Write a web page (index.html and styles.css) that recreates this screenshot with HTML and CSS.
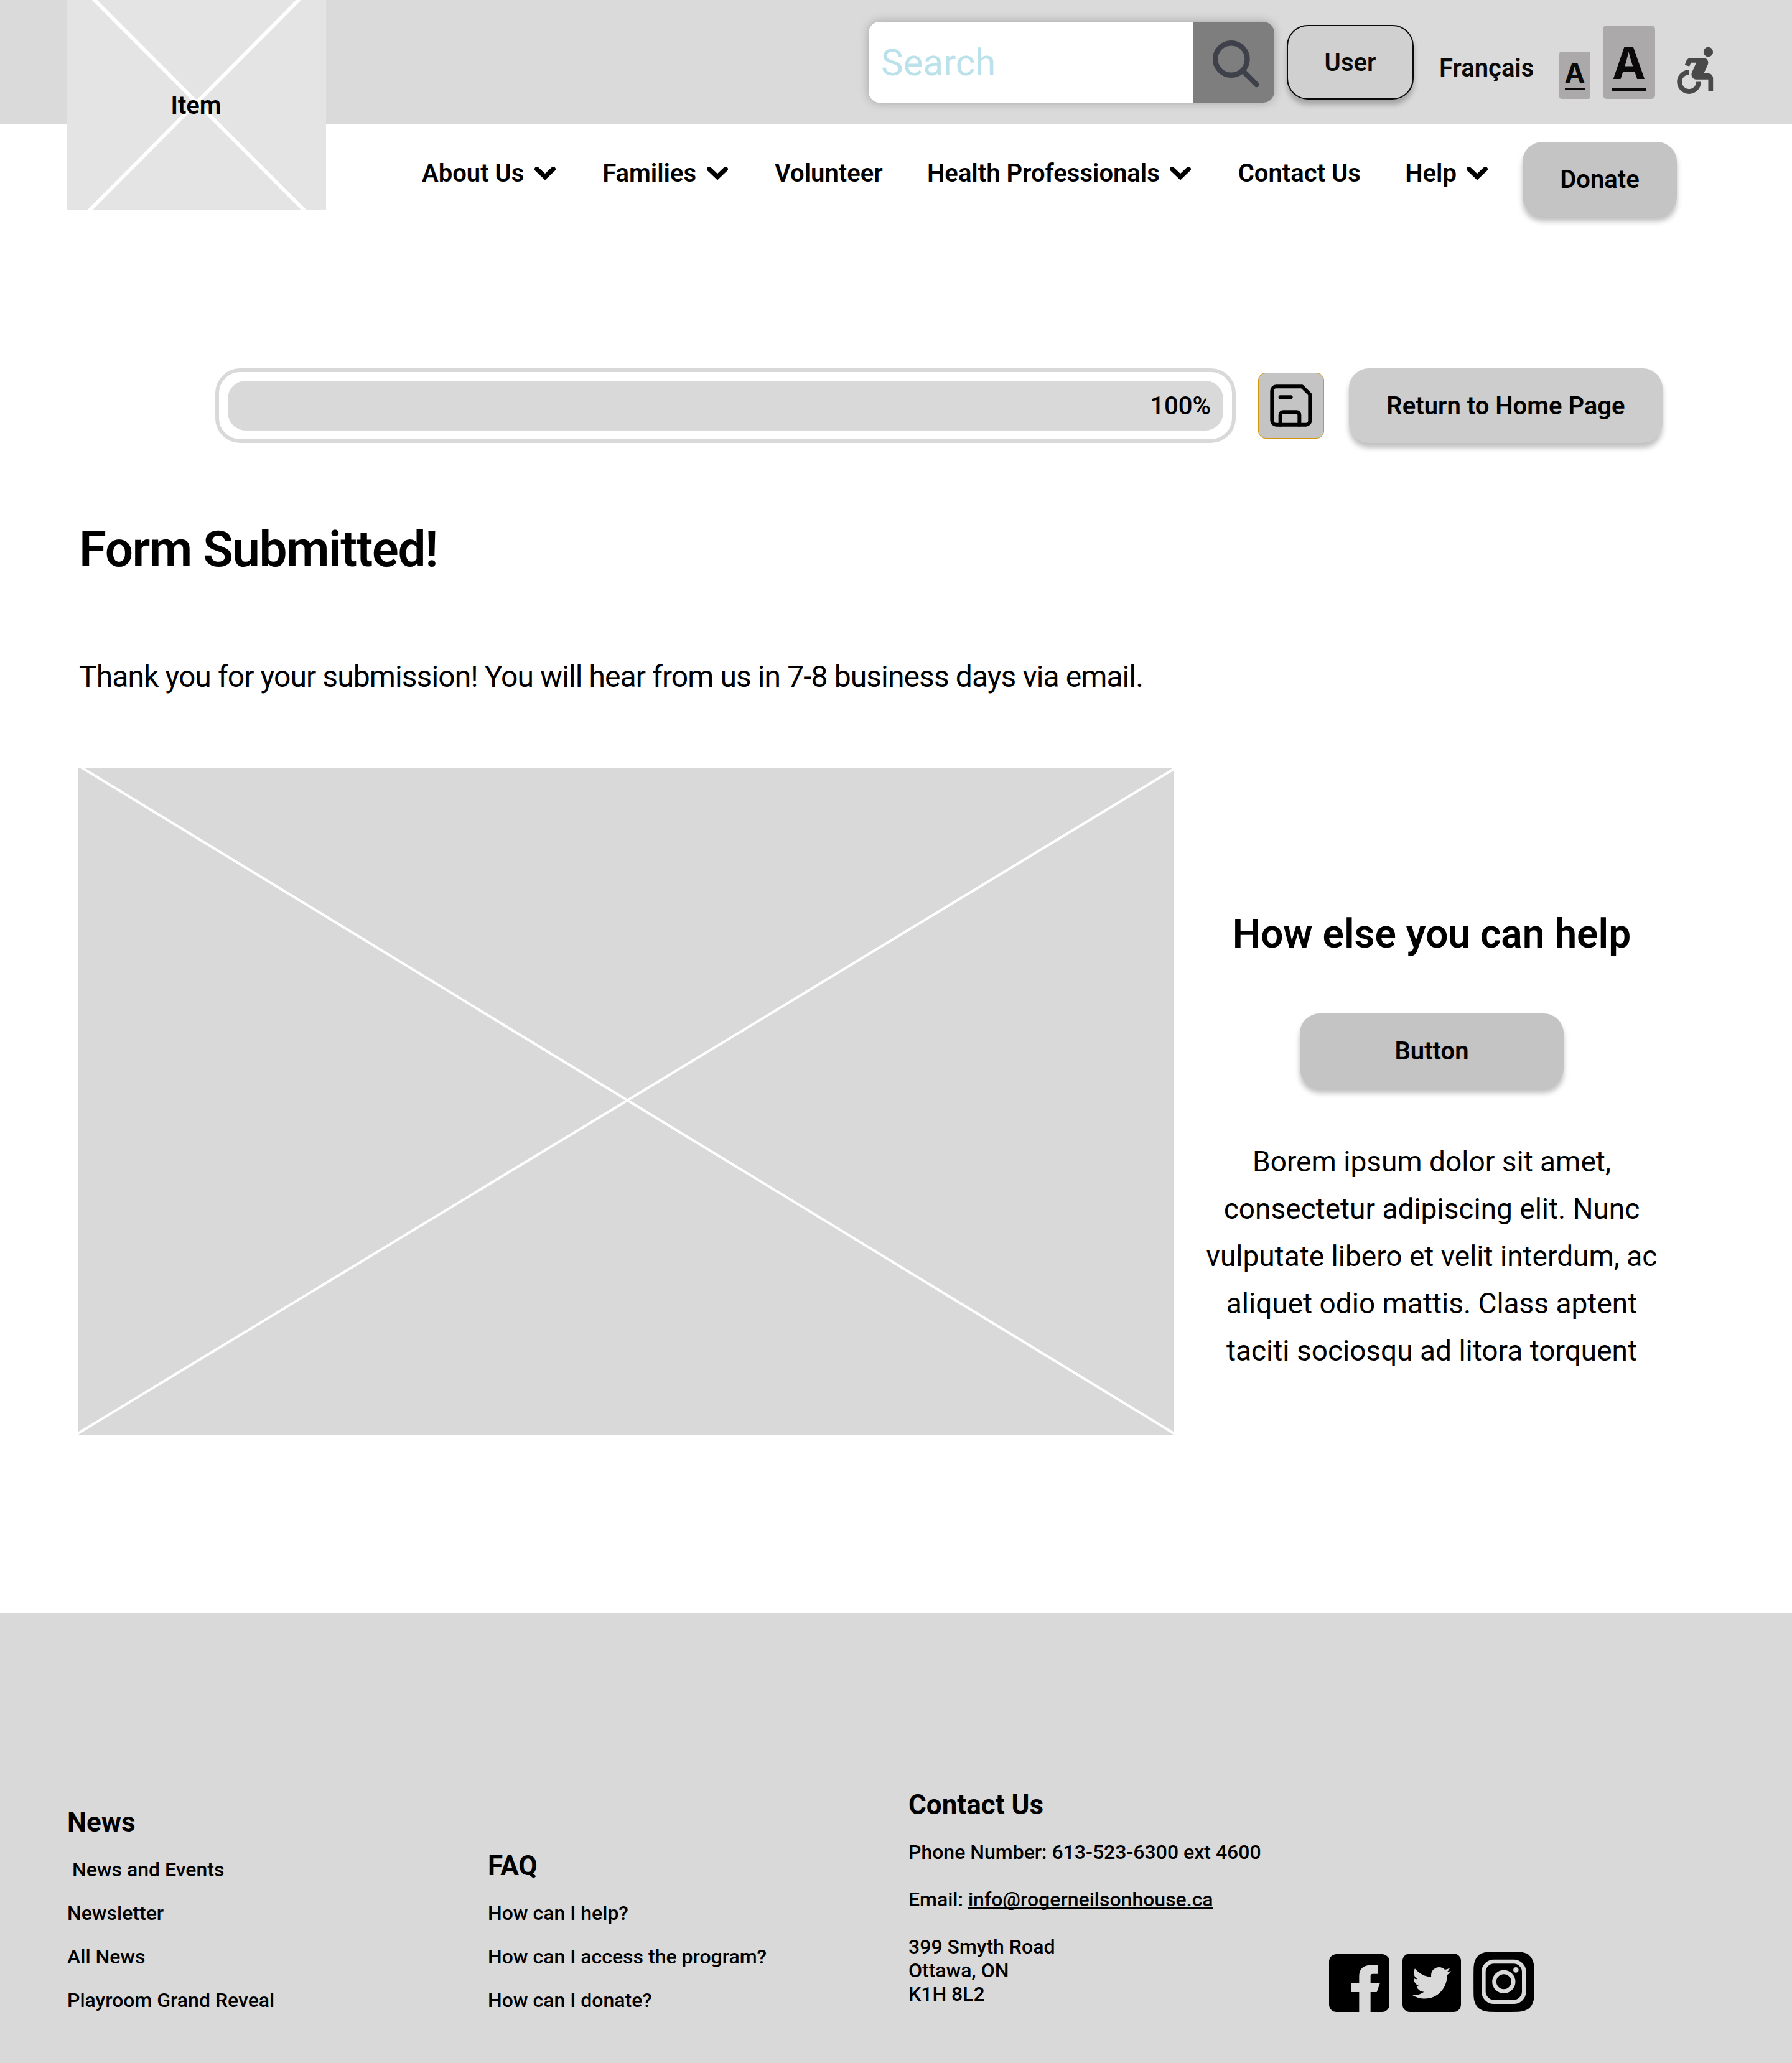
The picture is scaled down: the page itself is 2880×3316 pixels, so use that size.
FILE: index.html
```html
<!DOCTYPE html>
<html lang="en">
<head>
  <meta charset="utf-8">
  <title>Form Submitted</title>
  <link rel="stylesheet" href="styles.css">
</head>
<body>
  <header class="header">
    <div class="topbar">
      <div class="search">
        <div class="search-inner">
          <span class="search-field">Search</span>
          <span class="search-button">
            <svg width="76" height="76" viewBox="0 0 76 76" fill="none" stroke="#3e404a" stroke-width="8.4" stroke-linecap="round">
              <circle cx="29.8" cy="30" r="25.7"/>
              <path d="M48.5 49 70.5 71"/>
            </svg>
          </span>
        </div>
      </div>
      <a class="button user">User</a>
      <div class="tools">
        <a class="lang">Français</a>
        <span class="size size-small"><span class="glyph">A</span></span>
        <span class="size size-large"><span class="glyph">A</span></span>
        <svg class="access" viewBox="0 0 24 24" fill="#494949">
          <circle cx="18" cy="4.54" r="2"/>
          <path d="M15 17h-2c0 1.65-1.35 3-3 3s-3-1.35-3-3 1.35-3 3-3v-2c-2.76 0-5 2.24-5 5s2.24 5 5 5 5-2.24 5-5zm3-3.5h-1.86l1.67-3.67C18.42 8.5 17.44 7 15.96 7h-5.2c-.81 0-1.54.47-1.87 1.2L8.22 10l1.92.53.65-1.53H13l-1.83 4.1c-.6 1.33.39 2.9 1.85 2.9H18v5h2v-5.5c0-1.1-.9-2-2-2z"/>
        </svg>
      </div>
    </div>
    <nav class="nav">
      <div class="nav-links">
        <a class="nav-link">About Us <svg class="chevron" viewBox="0 0 34 22"><path d="M3.8 3.8 17 16.3 30.2 3.8"/></svg></a>
        <a class="nav-link">Families <svg class="chevron" viewBox="0 0 34 22"><path d="M3.8 3.8 17 16.3 30.2 3.8"/></svg></a>
        <a class="nav-link">Volunteer</a>
        <a class="nav-link">Health Professionals <svg class="chevron" viewBox="0 0 34 22"><path d="M3.8 3.8 17 16.3 30.2 3.8"/></svg></a>
        <a class="nav-link">Contact Us</a>
        <a class="nav-link">Help <svg class="chevron" viewBox="0 0 34 22"><path d="M3.8 3.8 17 16.3 30.2 3.8"/></svg></a>
      </div>
      <a class="button donate">Donate</a>
    </nav>
    <div class="logo">
      <svg class="logo-cross" viewBox="0 0 416 338" stroke="#fff" stroke-width="6">
        <path d="M41 -3 384 341M375 -3 33 341"/>
      </svg>
      <span class="logo-text">Item</span>
    </div>
  </header>

  <main class="main">
    <div class="progress-row">
      <div class="progress"><div class="progress-fill">100%</div></div>
      <a class="save">
        <svg width="68" height="68" viewBox="94 84 204 204" fill="none" stroke="#000" stroke-width="18" stroke-linejoin="round" stroke-linecap="round">
          <path d="M124 94H249L287 132V258a20 20 0 0 1-20 20H124a20 20 0 0 1-20-20V114a20 20 0 0 1 20-20z"/>
          <path d="M144 278V231a14 14 0 0 1 14-14h64a14 14 0 0 1 14 14v47M144 145h51"/>
        </svg>
      </a>
      <a class="button home">Return to Home Page</a>
    </div>

    <h1 class="title">Form Submitted!</h1>
    <p class="lead">Thank you for your submission! You will hear from us in 7-8 business days via email.</p>

    <div class="feature">
      <svg class="picture" viewBox="0 0 1760 1072" stroke="#fff" stroke-width="4">
        <path d="M4 -1 1764 1072M1764 0 -4 1072"/>
      </svg>
      <aside class="aside">
        <h2 class="aside-title">How else you can help</h2>
        <a class="button aside-button">Button</a>
        <p class="aside-text">Borem ipsum dolor sit amet,<br>consectetur adipiscing elit. Nunc<br>vulputate libero et velit interdum, ac<br>aliquet odio mattis. Class aptent<br>taciti sociosqu ad litora torquent</p>
      </aside>
    </div>
  </main>

  <footer class="footer">
    <div class="column">
      <h3 class="column-title">News</h3>
      <a class="link">&nbsp;News and Events</a>
      <a class="link">Newsletter</a>
      <a class="link">All News</a>
      <a class="link">Playroom Grand Reveal</a>
    </div>
    <div class="column">
      <h3 class="column-title">FAQ</h3>
      <a class="link">How can I help?</a>
      <a class="link">How can I access the program?</a>
      <a class="link">How can I donate?</a>
    </div>
    <div class="column contact">
      <h3 class="column-title">Contact Us</h3>
      <p class="contact-text">Phone Number: 613-523-6300 ext 4600<br><br>Email: <a class="mail">info@rogerneilsonhouse.ca</a><br><br>399 Smyth Road<br>Ottawa, ON<br>K1H 8L2</p>
    </div>
    <div class="social">
      <svg width="97" height="93" viewBox="108 124 291 279">
        <rect x="108" y="124" width="291" height="279" rx="36"/>
        <path fill="#d9d9d9" d="M253 404V307H216V262H253V230C253 196 273 177 307 177H345V219H321C311 219 308 223 308 232V262H354L338 307H308V404Z"/>
      </svg>
      <svg width="94" height="94" viewBox="461 120 282 282">
        <rect x="461" y="120" width="282" height="282" rx="36"/>
        <path fill="#d9d9d9" transform="translate(470.6 112.3) scale(.584)" d="M351.1 190.8c.2 2.8.2 5.7.2 8.5 0 86.7-66 186.6-186.6 186.6-37.2 0-71.7-10.8-100.7-29.4 5.3.6 10.4.8 15.8.8 30.7 0 58.9-10.4 81.4-28-28.8-.6-53-19.5-61.3-45.5 10.1 1.5 19.2 1.5 29.6-1.2-30-6.1-52.5-32.5-52.5-64.4v-.8c8.7 4.9 18.9 7.9 29.6 8.3a65.447 65.447 0 0 1-29.2-54.6c0-12.2 3.2-23.4 8.9-33.1 32.3 39.8 80.8 65.8 135.2 68.6-9.3-44.5 24-80.6 64-80.6 18.9 0 35.9 7.9 47.9 20.7 14.8-2.8 29-8.3 41.6-15.8-4.9 15.2-15.2 28-28.8 36.1 13.2-1.4 26-5.1 37.8-10.2-8.9 13.1-20.1 24.7-32.9 34z"/>
      </svg>
      <svg width="98" height="97" viewBox="804 111 294 291">
        <path d="M880 112Q951 110 1022 112C1070 114 1095 140 1097 188Q1098 256 1097 325C1095 373 1070 399 1022 401Q951 403 880 401C832 399 807 373 805 325Q804 256 805 188C807 140 832 114 880 112Z"/>
        <g fill="none" stroke="#d9d9d9" stroke-width="20">
          <rect x="853" y="159" width="195" height="194" rx="50"/>
          <circle cx="950.5" cy="256" r="46"/>
        </g>
        <circle cx="1009" cy="199" r="13" fill="#d9d9d9"/>
      </svg>
    </div>
  </footer>
</body>
</html>
```
FILE: styles.css
```css
* { box-sizing: border-box; }

body {
  margin: 0;
  width: 2880px;
  background: #fff;
  color: #000;
  font-family: Roboto, "Liberation Sans", sans-serif;
}

h1, h2, h3, p { margin: 0; }
svg { display: block; flex: none; }

.header { position: relative; height: 348px; }

.topbar {
  display: flex;
  align-items: center;
  height: 200px;
  padding-left: 1396px;
  background: #dadada;
  color: #0a0a0a;
}

.search {
  width: 652px;
  height: 130px;
  margin-right: 20px;
  border-radius: 18px;
  background: #e2e2e2;
  box-shadow: 0 0 16px rgba(0, 0, 0, .26);
}
.search-inner {
  display: flex;
  height: 100%;
  border-radius: 18px;
  overflow: hidden;
}
.search-field {
  width: 522px;
  padding-left: 20px;
  background: #fff;
  color: #bbe1ea;
  font-size: 60px;
  line-height: 131px;
}
.search-button {
  display: flex;
  align-items: center;
  justify-content: center;
  width: 130px;
  padding: 6px 0 0 8px;
  background: #7e7e7e;
}

.button {
  display: flex;
  align-items: center;
  justify-content: center;
  height: 120px;
  border-radius: 32px;
  background: #c4c4c4;
  box-shadow: 0 8px 8px rgba(0, 0, 0, .25);
  font-size: 40px;
  font-weight: 600;
}

.user {
  width: 204px;
  margin-right: 41px;
  border: 2px solid #0a0a0a;
  border-radius: 34px;
  background: #d0d0d0;
}

.tools { display: flex; align-items: flex-end; height: 118px; }
.lang {
  width: 193px;
  padding-bottom: 26px;
  font-size: 40px;
  font-weight: 600;
  line-height: 47px;
}
.size {
  display: flex;
  align-items: flex-start;
  justify-content: center;
  background: #aba9aa;
  font-family: Inter, "Liberation Sans", sans-serif;
  font-weight: 700;
}
.glyph { border-bottom: 0 solid #0a0a0a; }
.size-small {
  width: 50px;
  height: 76px;
  margin-right: 20px;
  padding-top: 12px;
  border-radius: 4px;
  font-size: 44px;
  line-height: 44px;
}
.size-small .glyph { padding-bottom: 2px; border-bottom-width: 3px; }
.size-large {
  width: 84px;
  height: 118px;
  margin-right: 16px;
  padding-top: 20px;
  border-radius: 6px;
  font-size: 72px;
  line-height: 80px;
}
.size-large .glyph { border-bottom-width: 5px; }
.access { width: 92.6px; height: 92.6px; }

.nav {
  display: flex;
  align-items: flex-start;
  padding: 28px 0 0 678px;
}
.nav-links { display: flex; gap: 71.4px; width: 1769px; padding-top: 27px; }
.nav-link {
  display: flex;
  font-size: 40px;
  font-weight: 600;
  line-height: 47px;
  white-space: nowrap;
}
.chevron {
  width: 34px;
  height: 22px;
  margin: 13px 4px 0 16.5px;
  fill: none;
  stroke: #000;
  stroke-width: 7.4;
  stroke-linecap: round;
}
.donate { width: 248px; }

.logo {
  position: absolute;
  top: 0;
  left: 108px;
  display: grid;
  place-items: center;
  width: 416px;
  height: 338px;
  background: #e4e4e4;
}
.logo-cross, .logo-text { grid-area: 1 / 1; }
.logo-cross { width: 416px; height: 338px; }
.logo-text { padding-right: 2px; font-size: 40px; font-weight: 600; }

.main { padding-top: 244px; }

.progress-row { display: flex; align-items: center; padding-left: 346px; }
.progress {
  width: 1640px;
  height: 120px;
  margin-right: 36px;
  padding: 14px;
  border: 6px solid #d9d9d9;
  border-radius: 40px;
}
.progress-fill {
  height: 80px;
  padding-right: 20px;
  border-radius: 29px;
  background: #d9d9d9;
  font-size: 40px;
  font-weight: 500;
  line-height: 81px;
  text-align: right;
}
.save {
  display: flex;
  align-items: center;
  justify-content: center;
  width: 106px;
  height: 106px;
  margin-right: 40px;
  border: 1px solid #d4960c;
  border-radius: 12px;
  background: #c4c4c4;
}
.home { width: 504px; background: #cdcdcd; }

.title {
  padding: 124px 0 0 127px;
  font-size: 80px;
  font-weight: 600;
  letter-spacing: -0.019em;
  line-height: 94px;
}
.lead {
  padding: 130px 0 0 127px;
  font-size: 48px;
  letter-spacing: -0.019em;
  line-height: 56px;
}

.feature { display: flex; padding: 118px 0 286px 126px; }
.picture { width: 1760px; height: 1072px; background: #d9d9d9; }
.aside {
  display: flex;
  flex-direction: column;
  align-items: center;
  width: 830px;
  padding-top: 230px;
}
.aside-title { font-size: 64px; font-weight: 600; line-height: 76px; }
.aside-button { width: 424px; margin: 89px 0 80px; }
.aside-text {
  font-size: 46px;
  line-height: 76px;
  text-align: center;
  white-space: nowrap;
}

.footer {
  display: grid;
  grid-template-columns: repeat(4, 636px);
  column-gap: 40px;
  align-items: end;
  height: 724px;
  padding: 0 0 82px 108px;
  background: #d9d9d9;
}
.column { display: flex; flex-direction: column; gap: 32px; }
.column-title { font-size: 44px; font-weight: 700; line-height: 50px; }
.link, .contact-text { font-size: 32px; font-weight: 500; line-height: 38px; }
.contact { padding-bottom: 10px; }
.mail {
  text-decoration: underline;
  text-decoration-skip-ink: none;
}
.social { display: flex; align-items: flex-end; gap: 20.5px; }
```
